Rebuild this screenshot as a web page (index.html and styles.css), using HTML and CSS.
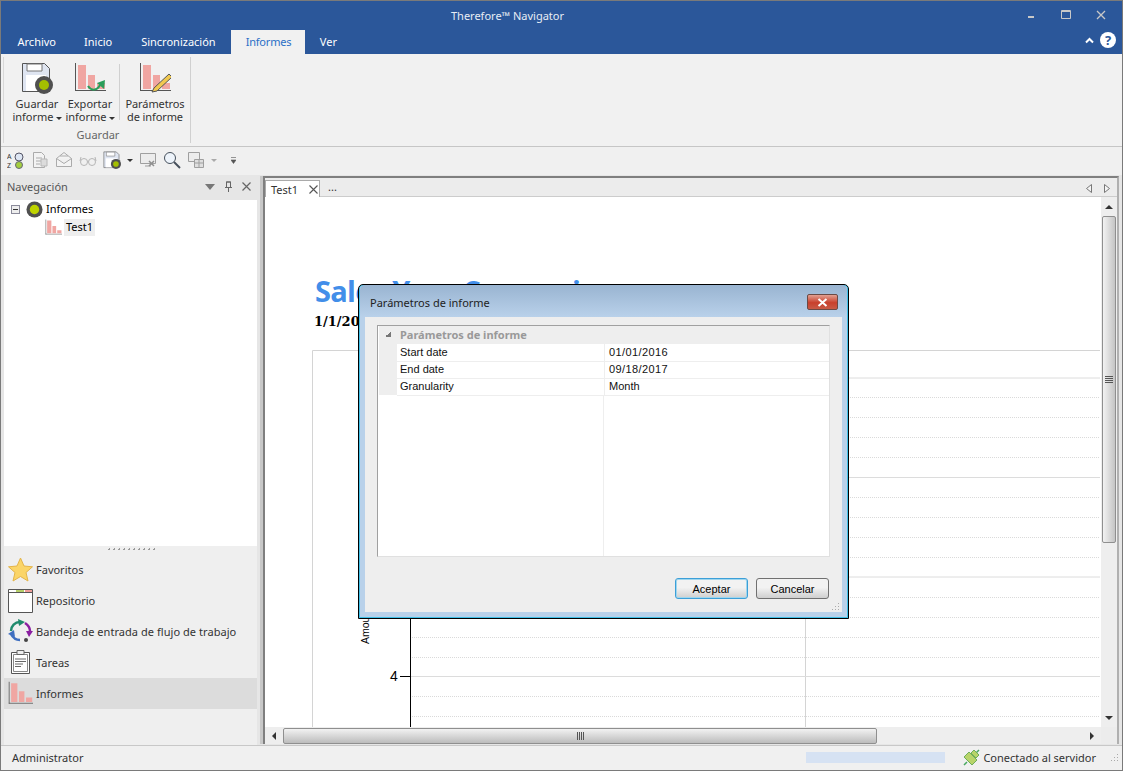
FILE: index.html
```html
<!DOCTYPE html>
<html lang="es">
<head>
    <meta charset="UTF-8">
    <title>Therefore Navigator</title>
    <link rel="stylesheet" href="styles.css">
</head>
<body>
    <svg class="icon-defs" width="0" height="0">
        <symbol id="bars" viewBox="0 0 32 32">
            <path d="M1.500 1v28" stroke="#555" fill="none"/>
            <path d="M1 28.500h31" stroke="#555" fill="none"/>
            <path d="M4 3h8v24H4zM14 13h7v14h-7zM23 21h8v6h-8z" fill="#f0a6a2"/>
        </symbol>
        <symbol id="disk" viewBox="0 0 32 32">
            <path d="M1.500 1.500h22l5 5v23h-27z" fill="#dfe5f1" stroke="#555"/>
            <path d="M6 2h15v7H6z" fill="#fff" stroke="#777"/>
            <path d="M5 13h20v16H5z" fill="#fff"/>
            <circle cx="23" cy="23" r="9" fill="#505050"/>
            <circle cx="23" cy="23" r="5" fill="#a4bf00"/>
        </symbol>
        <symbol id="dot" viewBox="0 0 18 18">
            <circle cx="9" cy="9" r="8.500" fill="#505050"/>
            <circle cx="9" cy="9" r="5" fill="#bfd400"/>
        </symbol>
    </svg>

    <div class="app">
        <header class="titlebar">
            <span class="title">Therefore™ Navigator</span>
            <div class="win-btns">
                <svg width="12" height="12" viewBox="0 0 12 12"><path d="M3 8h6" stroke="#c8c8c8" stroke-width="2"/></svg>
                <svg width="12" height="12" viewBox="0 0 12 12"><path d="M1.500 1.500h9v8h-9zM1 2.500h10" stroke="#c8c8c8" fill="none"/></svg>
                <svg width="12" height="12" viewBox="0 0 12 12"><path d="M2 2l8 8M10 2l-8 8" stroke="#c8c8c8" stroke-width="1.300" fill="none"/></svg>
            </div>
        </header>

        <nav class="ribbon-tabs">
            <a class="tab first">Archivo</a>
            <a class="tab">Inicio</a>
            <a class="tab">Sincronización</a>
            <a class="tab active">Informes</a>
            <a class="tab">Ver</a>
            <div class="tabs-right">
                <svg width="9" height="7" viewBox="0 0 9 7"><path d="M1 5.500l3.500-3.500 3.500 3.500" stroke="#fff" stroke-width="2" fill="none"/></svg>
                <span class="help">?</span>
            </div>
        </nav>

        <section class="ribbon">
            <div class="ribbon-group">
                <div class="ribbon-btns">
                    <div class="big-btn">
                        <svg width="32" height="32"><use href="#disk"/></svg>
                        <span>Guardar<br>informe<i class="caret"></i></span>
                    </div>
                    <div class="big-btn">
                        <svg width="32" height="32" viewBox="0 0 32 32">
                            <use href="#bars" width="32" height="32"/>
                            <path d="M14 24c3 5 9 5 12-1" stroke="#2a9d5a" stroke-width="2" fill="none"/>
                            <path d="M23 21l8-3-1 9z" fill="#2a9d5a"/>
                        </svg>
                        <span>Exportar<br>informe<i class="caret"></i></span>
                    </div>
                    <div class="ribbon-sep"></div>
                    <div class="big-btn wide">
                        <svg width="32" height="32" viewBox="0 0 32 32">
                            <use href="#bars" width="32" height="32"/>
                            <path d="M15 26l15-14 3 3-15 14-5 1z" fill="#f0c850" stroke="#555"/>
                        </svg>
                        <span>Parámetros<br>de informe</span>
                    </div>
                </div>
                <div class="group-label">Guardar</div>
            </div>
        </section>

        <div class="qat">
            <svg width="18" height="18" viewBox="0 0 18 18"><text x="0" y="8" class="qat-az">A</text><text x="0" y="17" class="qat-az">Z</text><circle cx="12" cy="6" r="4" fill="#dde6f3" stroke="#556"/><circle cx="12" cy="14" r="3.500" fill="#a4cf3f" stroke="#667"/></svg>
            <svg class="off" width="18" height="18" viewBox="0 0 18 18"><path d="M2.500 1.500h8l3 3v12h-11zM5 7h6M5 10h6M5 13h4" stroke="#9a9a9a" fill="#f4f4f4"/><path d="M10 8h6v7h-6z" fill="#d8d8d8" stroke="#aaa"/></svg>
            <svg class="off" width="18" height="18" viewBox="0 0 18 18"><path d="M1.500 7.500l7.500-6 7.500 6v8h-15zM1.500 7.500l7.500 5 7.500-5M5 5h8" stroke="#9a9a9a" fill="#f4f4f4"/></svg>
            <svg class="off" width="18" height="18" viewBox="0 0 18 18"><circle cx="5" cy="11" r="3.500" fill="none" stroke="#a8a8a8"/><circle cx="13" cy="11" r="3.500" fill="none" stroke="#a8a8a8"/><path d="M8.500 10h1M1 10l1-4M17 10l-1-4" stroke="#a8a8a8" fill="none"/></svg>
            <svg width="18" height="18"><use href="#disk" width="18" height="18"/></svg>
            <i class="caret qat-caret"></i>
            <svg class="off" width="18" height="18" viewBox="0 0 18 18"><path d="M1.500 2.500h15v10h-15zM6 15h6" stroke="#8c8c8c" fill="#ececec"/><path d="M10 10l5 5M15 10l-5 5" stroke="#777" stroke-width="1.500"/></svg>
            <svg width="18" height="18" viewBox="0 0 18 18"><circle cx="7" cy="7" r="5.500" fill="#eef4fb" stroke="#46505c"/><path d="M11 11l6 6" stroke="#46505c" stroke-width="2"/></svg>
            <svg class="off" width="18" height="18" viewBox="0 0 18 18"><path d="M1.500 1.500h11v9h-11z" stroke="#8c8c8c" fill="#ececec"/><path d="M7.500 8.500h9v8h-9zM7.500 12h9M12 8.500v8" stroke="#8c8c8c" fill="#dcdcdc"/></svg>
            <i class="caret qat-caret faded"></i>
            <svg class="qat-more" width="5" height="7" viewBox="0 0 5 7"><path d="M0 .5h5M0 3h5L2.500 6.500z" stroke="#555" fill="#555" stroke-width=".6"/></svg>
        </div>

        <main class="workspace">
            <aside class="nav-pane">
                <div class="pane-head">
                    <span>Navegación</span>
                    <div class="pane-tools">
                        <svg width="10" height="6" viewBox="0 0 10 6"><path d="M0 0h10L5 6z" fill="#777"/></svg>
                        <svg width="9" height="11" viewBox="0 0 9 11"><path d="M2.500 1v5.500h4V1zM1 6.500h7M4.500 7v4M2 1h5" stroke="#666" fill="none"/></svg>
                        <svg width="9" height="9" viewBox="0 0 9 9"><path d="M.5.500l8 8M8.500.500l-8 8" stroke="#666" stroke-width="1.200"/></svg>
                    </div>
                </div>
                <div class="tree">
                    <div class="tree-row">
                        <span class="expander"></span>
                        <svg width="17" height="17"><use href="#dot"/></svg>
                        <span class="tree-text">Informes</span>
                    </div>
                    <div class="tree-row child">
                        <svg width="17" height="17"><use href="#bars" width="17" height="17"/></svg>
                        <span class="tree-text sel">Test1</span>
                    </div>
                </div>
                <div class="grip"></div>
                <ul class="nav-list">
                    <li>
                        <svg width="25" height="25" viewBox="0 0 25 25"><path d="M12.500 1l3.500 8 8.500.8-6.500 5.700 2 8.500-7.500-4.500L5 24l2-8.500L.5 9.800 9 9z" fill="#fbd568" stroke="#e3b44a"/></svg>
                        <span>Favoritos</span>
                    </li>
                    <li>
                        <svg width="25" height="25" viewBox="0 0 25 25"><path d="M.5 1.500h24v23H.5z" fill="#fff" stroke="#555"/><path d="M.5 4.500h24" fill="none" stroke="#555"/><path d="M8 2h8v2H8z" fill="#b6cf6a"/><path d="M17 2h7v2h-7z" fill="#ef9e9a"/></svg>
                        <span>Repositorio</span>
                    </li>
                    <li>
                        <svg width="25" height="25" viewBox="0 0 25 25"><path d="M3 12c0-5 4-9 9-9" stroke="#1f8a6c" stroke-width="2.500" fill="none"/><path d="M10 0l7 3-6 4z" fill="#1f8a6c"/><path d="M17 4c3 2 5 5 5 8" stroke="#8a1fa0" stroke-width="2.500" fill="none"/><path d="M18 12h7l-4 6z" fill="#8a1fa0"/><path d="M12 21c-4 0-7-2-9-6" stroke="#3f6fc0" stroke-width="2.500" fill="none"/><path d="M0 15l6-4 1 7z" fill="#3f6fc0"/><circle cx="18" cy="21" r="2" fill="#444"/></svg>
                        <span class="long">Bandeja de entrada de flujo de trabajo</span>
                    </li>
                    <li>
                        <svg width="25" height="25" viewBox="0 0 25 25"><path d="M3.500 2.500h18v21h-18z" fill="#fff" stroke="#555"/><path d="M5.500 4.500h14v17h-14z" fill="none" stroke="#888"/><path d="M9 .5h7v4H9z" fill="#eee" stroke="#666"/><path d="M7 9h11M7 11.500h11M7 14h8M7 16.500h6" stroke="#666"/></svg>
                        <span>Tareas</span>
                    </li>
                    <li class="current">
                        <svg width="25" height="25"><use href="#bars" width="25" height="25"/></svg>
                        <span>Informes</span>
                    </li>
                </ul>
            </aside>

            <section class="doc-pane">
                <div class="doc-tabs">
                    <div class="doc-tab">
                        <span>Test1</span>
                        <svg width="9" height="9" viewBox="0 0 9 9"><path d="M.5.500l8 8M8.500.500l-8 8" stroke="#555" stroke-width="1.100"/></svg>
                    </div>
                    <span class="doc-more">...</span>
                    <div class="doc-arrows">
                        <svg width="6" height="9" viewBox="0 0 6 9"><path d="M5.500.500v8L.5 4.500z" fill="#f4f4f4" stroke="#777"/></svg>
                        <svg width="6" height="9" viewBox="0 0 6 9"><path d="M.5.500v8l5-4z" fill="#f4f4f4" stroke="#777"/></svg>
                    </div>
                </div>
                <div class="doc-body">
                    <div class="report">
                        <h1>Sales Year Comparison</h1>
                        <p class="report-date">1/1/2016 - 9/18/2017</p>
                        <svg class="chart" width="788" height="377" viewBox="0 0 788 377">
                            <path d="M.5 377V.5H788" stroke="#d4d4d4" fill="none"/>
                            <path d="M493.500 0v377" stroke="#d4d4d4"/>
                            <g class="grid-solid">
                                <path d="M98 28H788M98 127.500H788M98 227H788M98 326.500H788"/>
                            </g>
                            <g class="grid-dots">
                                <path d="M98 47.500H788M98 67.500H788M98 87.500H788M98 107.500H788M98 147.500H788M98 167.500H788M98 187.500H788M98 207.500H788M98 247.500H788M98 267.500H788M98 287.500H788M98 307.500H788M98 346.500H788M98 366.500H788"/>
                            </g>
                            <path d="M98.500 0v377M88 326.500h10" stroke="#000" fill="none"/>
                            <text class="axis-num" x="78" y="331">4</text>
                            <text class="axis-name" transform="translate(57 294) rotate(-90)">Amount</text>
                        </svg>
                    </div>
                    <div class="vscroll">
                        <div class="sb-btn"><svg width="8" height="4" viewBox="0 0 8 4"><path d="M4 0l4 4H0z" fill="#333"/></svg></div>
                        <div class="v-thumb"><svg width="8" height="7" viewBox="0 0 8 7"><path d="M0 .5h8M0 2.500h8M0 4.500h8M0 6.500h8" stroke="#555"/></svg></div>
                        <div class="sb-fill"></div>
                        <div class="sb-btn"><svg width="8" height="4" viewBox="0 0 8 4"><path d="M0 0h8L4 4z" fill="#333"/></svg></div>
                    </div>
                    <div class="hscroll">
                        <div class="sb-btn"><svg width="4" height="8" viewBox="0 0 4 8"><path d="M4 0v8L0 4z" fill="#333"/></svg></div>
                        <div class="h-thumb"><svg width="7" height="8" viewBox="0 0 7 8"><path d="M.5 0v8M2.500 0v8M4.500 0v8M6.500 0v8" stroke="#555"/></svg></div>
                        <div class="sb-fill"></div>
                        <div class="sb-btn"><svg width="4" height="8" viewBox="0 0 4 8"><path d="M0 0l4 4-4 4z" fill="#333"/></svg></div>
                    </div>
                    <div class="sb-corner"></div>
                </div>
            </section>
        </main>

        <footer class="statusbar">
            <span>Administrator</span>
            <div class="status-right">
                <div class="progress"></div>
                <svg width="17" height="17" viewBox="0 0 17 17"><path d="M1 16l3-3M13 4l3-3" stroke="#4aa860" stroke-width="1.500"/><path d="M6 3l8 8-5 5-8-8z" fill="#b8d46a" stroke="#6fae5a"/><path d="M11 1l5 5-3 3-5-5z" fill="#b8d46a" stroke="#6fae5a"/></svg>
                <span>Conectado al servidor</span>
                <svg class="resize" width="9" height="9" viewBox="0 0 9 9"><path d="M7 1h1v1H7zM4 4h1v1H4zM7 4h1v1H7zM1 7h1v1H1zM4 7h1v1H4zM7 7h1v1H7z" fill="#aaa"/></svg>
            </div>
        </footer>

        <div class="dialog">
            <div class="dialog-title">
                <span>Parámetros de informe</span>
                <div class="dialog-close">
                    <svg width="11" height="9" viewBox="0 0 11 9"><path d="M1.500 1l8 7M9.500 1l-8 7" stroke="#fff" stroke-width="2"/></svg>
                </div>
            </div>
            <div class="dialog-inner">
                <div class="prop-grid">
                    <div class="prop-head"><i class="prop-arrow"></i><span>Parámetros de informe</span></div>
                    <div class="prop-row"><span>Start date</span><span class="num">01/01/2016</span></div>
                    <div class="prop-row"><span>End date</span><span class="num">09/18/2017</span></div>
                    <div class="prop-row"><span>Granularity</span><span>Month</span></div>
                    <div class="prop-empty"></div>
                </div>
                <div class="dialog-btns">
                    <button class="default">Aceptar</button>
                    <button>Cancelar</button>
                </div>
                <svg class="dialog-resize" width="9" height="9" viewBox="0 0 9 9"><path d="M7 1h1v1H7zM4 4h1v1H4zM7 4h1v1H7zM1 7h1v1H1zM4 7h1v1H4zM7 7h1v1H7z" fill="#aaa"/></svg>
            </div>
        </div>
    </div>
</body>
</html>
```

FILE: styles.css
```css
/* Page */
* {
    box-sizing: border-box;
}

body {
    margin: 0;
    background: #f0f0f0;
    font-family: "Noto Sans", "DejaVu Sans", sans-serif;
    font-size: 11px;
    color: #333;
}

.icon-defs {
    position: absolute;
}

.app {
    position: relative;
    width: 1123px;
    height: 771px;
    display: flex;
    flex-direction: column;
    overflow: hidden;
    background: #f0f0f0;
    border: 1px solid #7a7a7a;
}

/* Title bar */
.titlebar {
    height: 29px;
    background: #2b579a;
    display: flex;
    align-items: center;
    justify-content: center;
    position: relative;
    padding-right: 108px;
    color: #e8edf5;
    flex: none;
}

.win-btns {
    position: absolute;
    right: 15px;
    top: 8px;
    display: flex;
    gap: 23px;
}

/* Ribbon */
.ribbon-tabs {
    height: 24px;
    background: #2b579a;
    display: flex;
    padding-left: 2px;
    flex: none;
}

.tab {
    padding: 0 14.500px;
    line-height: 24px;
    color: #fff;
}

.tab.first {
    padding-right: 13.500px;
}

.tab.active {
    margin-left: 1px;
    padding-right: 14px;
    background: #f1f1f1;
    color: #2b6fc6;
    letter-spacing: -.2px;
}

.tabs-right {
    margin-left: auto;
    display: flex;
    align-items: center;
    gap: 6px;
    padding: 0 6px 4px 0;
}

.help {
    width: 16px;
    height: 16px;
    border-radius: 50%;
    background: #fff;
    color: #2b579a;
    font-weight: bold;
    font-size: 13px;
    line-height: 16px;
    text-align: center;
}

.ribbon {
    height: 93px;
    background: #f1f1f1;
    border-bottom: 1px solid #c6c6c6;
    padding: 3px 0 0 2px;
    flex: none;
}

.ribbon-group {
    width: 188px;
    height: 86px;
    border-right: 1px solid #d0d0d0;
    border-left: 1px solid #d8d8d8;
    display: flex;
    flex-direction: column;
}

.ribbon-btns {
    display: flex;
    padding-left: 7px;
    height: 70px;
}

.big-btn {
    width: 52px;
    display: flex;
    flex-direction: column;
    align-items: center;
    gap: 3px;
    padding-top: 5px;
    text-align: center;
    line-height: 13px;
}

.big-btn + .big-btn {
    margin-left: 1px;
}

.big-btn.wide {
    width: 58px;
    letter-spacing: -.1px;
}

.ribbon-sep {
    width: 1px;
    height: 56px;
    margin: 7px 6px 0 3px;
    background: #d0d0d0;
}

.group-label {
    text-align: center;
    color: #666;
    line-height: 14px;
    margin-top: 1px;
    padding-left: 2px;
}

.caret {
    display: inline-block;
    width: 0;
    height: 0;
    margin-left: 2px;
    vertical-align: middle;
    border: 3px solid transparent;
    border-top: 3px solid #333;
    border-bottom: none;
}

.qat {
    height: 28px;
    display: flex;
    align-items: center;
    gap: 6px;
    padding: 0 0 2px 6px;
    background: #f0f0f0;
    flex: none;
}

.qat-az {
    font-size: 7px;
    fill: #333;
}

.qat .off {
    opacity: .8;
}

.qat-caret {
    margin: 0;
}

.qat-caret.faded {
    border-top-color: #aaa;
    margin-right: 8px;
}

/* Workspace */
.workspace {
    flex: 1;
    display: flex;
    min-height: 0;
    background: #e6e6e6;
}

.nav-pane {
    width: 253px;
    margin-left: 3px;
    display: flex;
    flex-direction: column;
    background: #efefef;
    flex: none;
}

.pane-head {
    height: 25px;
    display: flex;
    align-items: center;
    justify-content: space-between;
    padding: 0 6px 2px 4px;
    margin-left: -1px;
    background: #e6e6e6;
    color: #555;
    flex: none;
}

.pane-tools {
    display: flex;
    align-items: center;
    gap: 9px;
}

.tree {
    height: 346px;
    background: #fff;
    color: #000;
    flex: none;
}

.tree-row {
    display: flex;
    align-items: center;
    gap: 3px;
    height: 18px;
    padding-left: 7px;
}

.tree-row.child {
    gap: 2px;
    padding-left: 41px;
}

.tree-text {
    padding-bottom: 1px;
}

.expander {
    position: relative;
    width: 9px;
    height: 9px;
    margin-right: 3px;
    border: 1px solid #8a8a9a;
    background: #eee;
}

.expander::after {
    content: "";
    position: absolute;
    left: 1px;
    top: 3px;
    width: 5px;
    height: 1px;
    background: #333;
}

.sel {
    background: #eee;
    padding: 0 2px 1px;
    line-height: 16px;
}

.grip {
    height: 8px;
    margin: 0 auto;
    width: 48px;
    flex: none;
    background: radial-gradient(circle, #999 1px, transparent 1px) 0 -1px / 5px 9px repeat-x;
}

.nav-list {
    list-style: none;
    margin: 0;
    padding: 0;
}

.nav-list li {
    height: 31px;
    display: flex;
    align-items: center;
    gap: 3px;
    padding-left: 4px;
}

.nav-list .long {
    letter-spacing: .05px;
}

.nav-list li.current {
    background: #dcdcdc;
}

/* Document pane */
.doc-pane {
    flex: 1;
    margin: 1px 3px 1px 6px;
    display: flex;
    flex-direction: column;
    border-left: 2px solid #7f7f7f;
    border-top: 2px solid #7f7f7f;
    border-right: 2px solid #b0b0b0;
    box-shadow: -3px 0 0 #c8c8c8;
    min-width: 0;
}

.doc-tabs {
    height: 19px;
    display: flex;
    align-items: flex-end;
    background: #ececec;
    border-bottom: 1px solid #ccc;
    position: relative;
    flex: none;
}

.doc-tab {
    height: 17px;
    width: 55px;
    background: #fff;
    border: 1px solid #aaa;
    border-bottom: none;
    display: flex;
    align-items: center;
    gap: 11px;
    padding-left: 5px;
    color: #333;
    margin-bottom: -1px;
}

.doc-more {
    padding: 0 0 2px 8px;
}

.doc-arrows {
    position: absolute;
    right: 7px;
    top: 6px;
    display: flex;
    gap: 12px;
}

.doc-body {
    flex: 1;
    min-height: 0;
    display: grid;
    grid-template-columns: 1fr 16px;
    grid-template-rows: 1fr 17px;
    background: #ececec;
}

.report {
    background: #fff;
    padding: 74px 0 0 49px;
    overflow: hidden;
    min-height: 0;
    color: #000;
}

.report h1 {
    margin: 0 0 0 1px;
    font-family: "Open Sans", sans-serif;
    font-size: 29px;
    line-height: 40px;
    letter-spacing: -.7px;
    color: #428ee9;
}

.report-date {
    margin: 2px 0 19px;
    font-family: "DejaVu Serif", serif;
    font-size: 13px;
    font-weight: bold;
    line-height: 18px;
}

.chart {
    display: block;
    margin-left: -2px;
}

.grid-solid {
    stroke: #dcdcdc;
    fill: none;
}

.grid-dots {
    stroke: #dadada;
    stroke-dasharray: 1 1;
    fill: none;
}

.axis-num {
    font-size: 14px;
    font-family: "Liberation Sans", sans-serif;
}

.axis-name {
    font-size: 10.500px;
    font-family: "Liberation Sans", sans-serif;
}

/* Scroll bars */
.vscroll {
    display: flex;
    flex-direction: column;
    min-height: 0;
    background: #eee;
}

.hscroll {
    display: flex;
    background: #eee;
    padding-top: 1px;
}

.sb-btn {
    flex: none;
    width: 18px;
    height: 16px;
    display: flex;
    align-items: center;
    justify-content: center;
}

.vscroll .sb-btn {
    width: 16px;
    height: 19px;
}

.sb-fill {
    flex: 1;
}

.v-thumb {
    height: 327px;
    margin: 0 1px;
    border: 1px solid #8f8f8f;
    border-radius: 2px;
    background: linear-gradient(90deg, #f2f2f2, #c4c4c4);
    display: flex;
    align-items: center;
    justify-content: center;
}

.h-thumb {
    width: 594px;
    border: 1px solid #8f8f8f;
    border-radius: 2px;
    background: linear-gradient(#f2f2f2, #bcbcbc);
    display: flex;
    align-items: center;
    justify-content: center;
}

.sb-corner {
    background: #ececec;
}

/* Status bar */
.statusbar {
    height: 25px;
    flex: none;
    background: #f0f0f0;
    border-top: 1px solid #c8c8c8;
    display: flex;
    align-items: center;
    justify-content: space-between;
    padding: 0 3px 2px 11px;
}

.status-right {
    display: flex;
    align-items: center;
    gap: 3px;
}

.progress {
    width: 139px;
    height: 11px;
    background: #d6e2f3;
    margin-right: 15px;
}

.resize {
    margin-left: 11px;
}

/* Dialog */
.dialog {
    position: absolute;
    left: 357px;
    top: 283px;
    width: 491px;
    height: 335px;
    background: #b9d1ea;
    border: 1px solid #000;
    border-radius: 5px 5px 0 0;
    box-shadow: inset 0 0 0 1px #3fc0e8;
    padding: 0 6px 6px;
    display: flex;
    flex-direction: column;
}

.dialog-title {
    height: 32px;
    margin: 0 -5px;
    padding: 3px 9px 0 10px;
    background: linear-gradient(#99b4d1, #b9d1ea);
    border-radius: 5px 5px 0 0;
    display: flex;
    align-items: center;
    justify-content: space-between;
    color: #222;
    flex: none;
}

.dialog-close {
    width: 31px;
    height: 16px;
    margin-top: -1px;
    background: linear-gradient(#e2a092, #c8402c 55%, #c85a45);
    border: 1px solid #6b4a45;
    border-radius: 2px;
    display: flex;
    align-items: center;
    justify-content: center;
}

.dialog-inner {
    flex: 1;
    position: relative;
    background: #eeeeee;
    padding: 8px 12px 0;
}

.prop-grid {
    height: 232px;
    background: #fff;
    border: 1px solid #a8a8a8;
    border-color: #a0a0a0 #e0e0e0 #e0e0e0 #a0a0a0;
    display: flex;
    flex-direction: column;
    color: #222;
}

.prop-head {
    height: 18px;
    background: #eeeeee;
    margin: 0 0 0 1px;
    padding-bottom: 2px;
    display: flex;
    align-items: center;
    color: #999;
    font-weight: bold;
    flex: none;
}

.prop-arrow {
    width: 21px;
    height: 6px;
    flex: none;
    background: linear-gradient(135deg, transparent 50%, #777 50%) 6px 0 / 6px 6px no-repeat;
}

.prop-row {
    height: 17px;
    display: grid;
    grid-template-columns: 207px 1fr;
    margin-left: 1px;
    padding-left: 18px;
    flex: none;
    background: linear-gradient(#eee, #eee) 0 0 / 18px 100% no-repeat;
    font-family: "Liberation Sans", sans-serif;
    color: #111;
    line-height: 17px;
}

.prop-row span {
    border-bottom: 1px solid #eee;
    padding-left: 3px;
}

.prop-row span + span {
    border-left: 1px solid #eee;
    padding-left: 4px;
}

.prop-row .num {
    letter-spacing: .4px;
}

.prop-empty {
    flex: 1;
    margin-left: 225px;
    border-left: 1px solid #eee;
}

.dialog-btns {
    display: flex;
    justify-content: flex-end;
    gap: 8px;
    padding: 21px 1px 0 0;
}

.dialog-btns button {
    width: 73px;
    height: 21px;
    padding: 0;
    font-family: "Liberation Sans", sans-serif;
    font-size: 11px;
    color: #000;
    background: linear-gradient(#f2f2f2 45%, #cfcfcf);
    border: 1px solid #707070;
    border-radius: 3px;
}

.dialog-btns .default {
    border-color: #3c9fd8;
    box-shadow: inset 0 0 0 1px #9fd6ee;
}

.dialog-resize {
    position: absolute;
    right: 2px;
    bottom: 1px;
}
```
